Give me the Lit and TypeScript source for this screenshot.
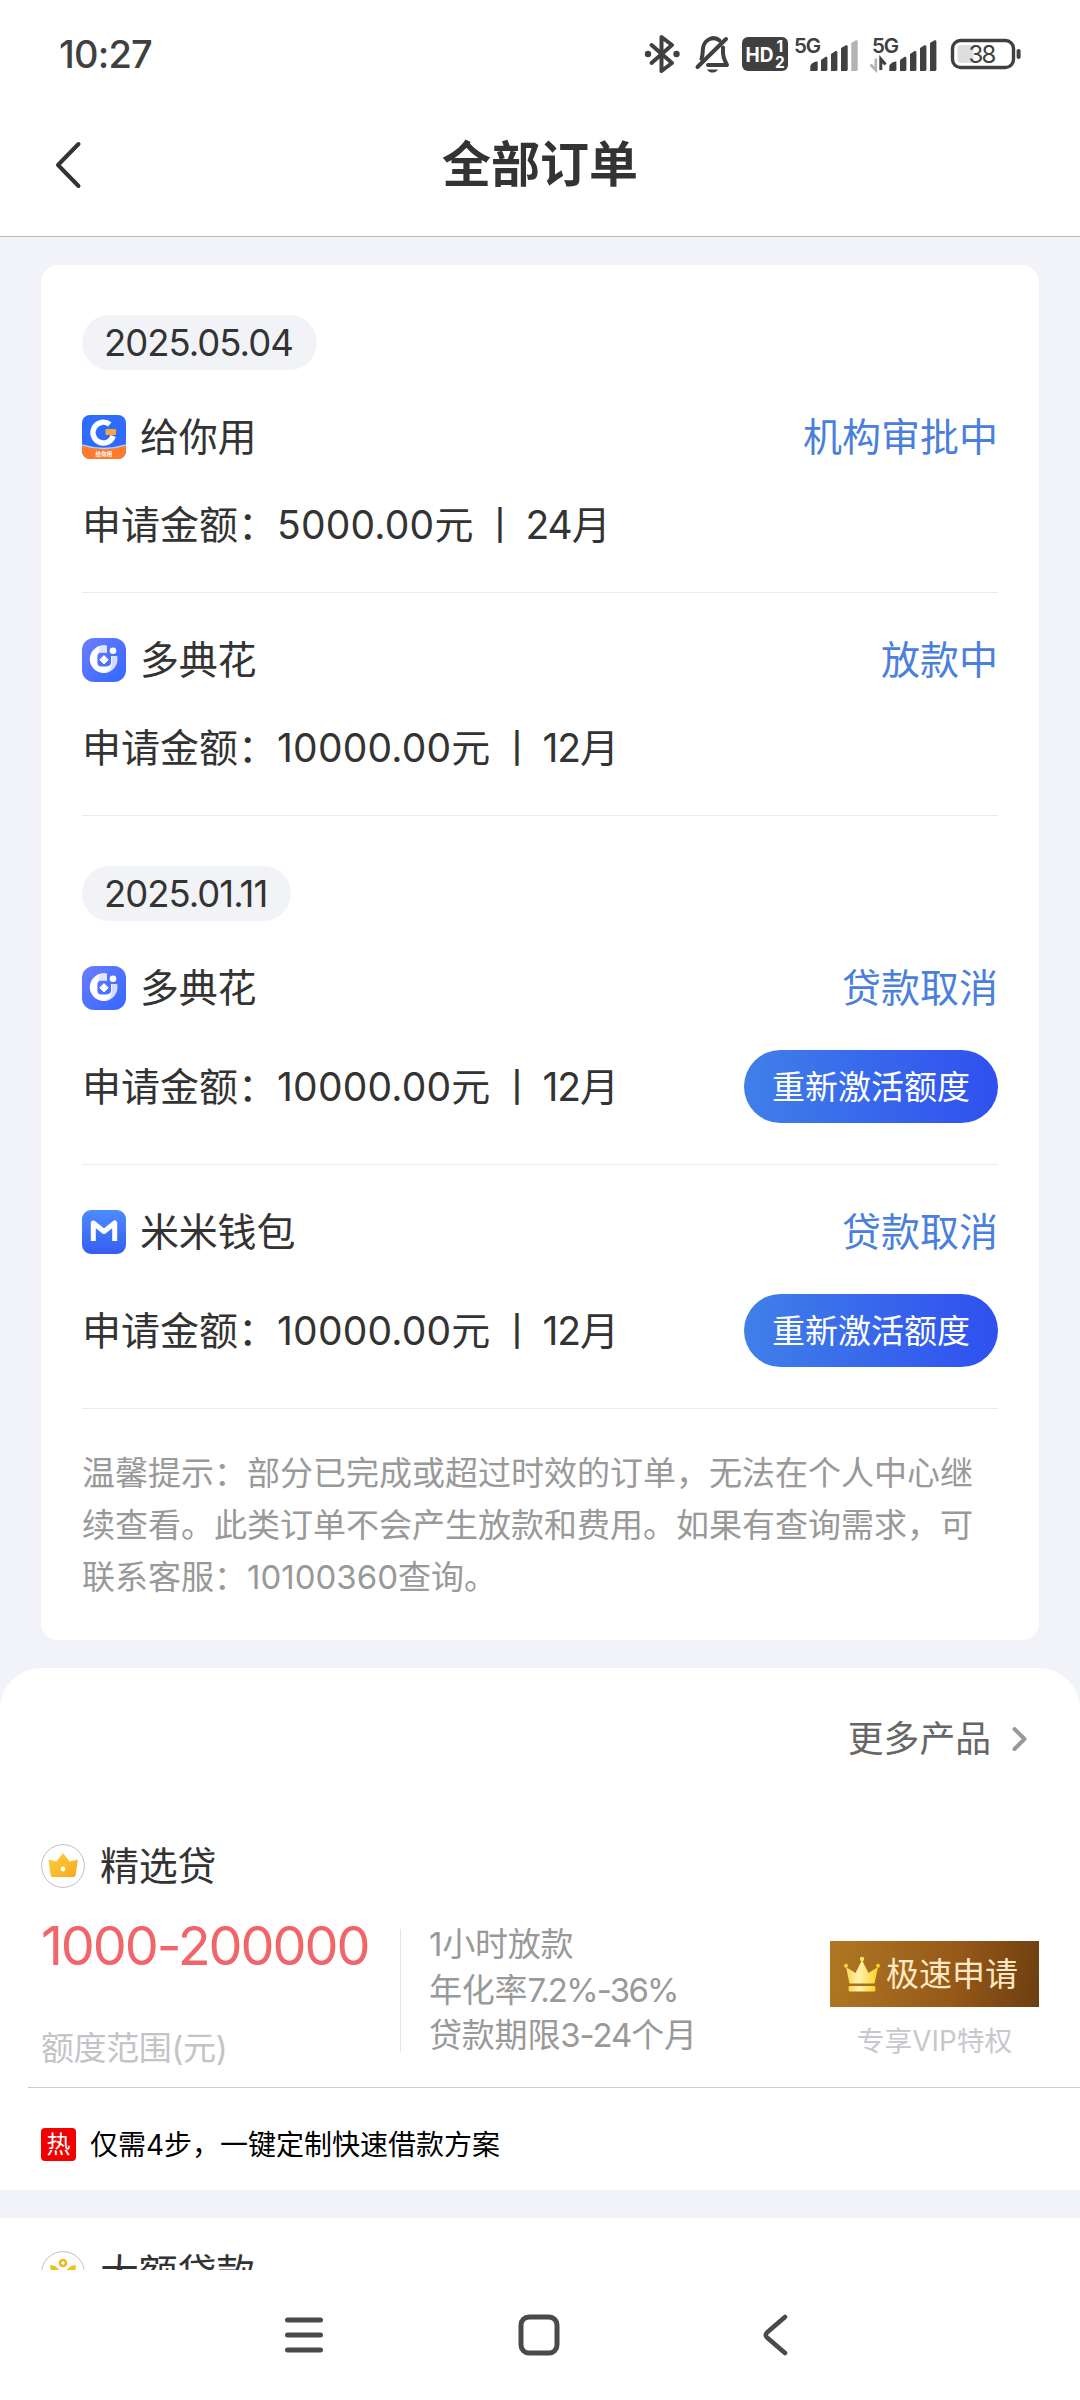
import { LitElement, html, css, svg, nothing, TemplateResult } from "lit";
import { customElement, property } from "lit/decorators.js";

type Brand = "geini" | "duodian" | "mimi";

interface Order {
  brand: Brand;
  name: string;
  status: string;
  amount: string;
  term: string;
  retry?: boolean;
}

interface OrderGroup {
  date: string;
  orders: Order[];
}

const groups: OrderGroup[] = [
  {
    date: "2025.05.04",
    orders: [
      { brand: "geini", name: "给你用", status: "机构审批中", amount: "5000.00", term: "24" },
      { brand: "duodian", name: "多典花", status: "放款中", amount: "10000.00", term: "12" },
    ],
  },
  {
    date: "2025.01.11",
    orders: [
      { brand: "duodian", name: "多典花", status: "贷款取消", amount: "10000.00", term: "12", retry: true },
      { brand: "mimi", name: "米米钱包", status: "贷款取消", amount: "10000.00", term: "12", retry: true },
    ],
  },
];

const notice = [
  "温馨提示：部分已完成或超过时效的订单，无法在个人中心继",
  "续查看。此类订单不会产生放款和费用。如果有查询需求，可",
  "联系客服：10100360查询。",
];

const FONT = css`Inter, "Noto Sans CJK SC", sans-serif`;

@customElement("status-bar")
export class StatusBar extends LitElement {
  static styles = css`
    :host {
      display: flex;
      align-items: center;
      height: 108px;
      padding: 0 59px 0 59px;
      box-sizing: border-box;
      color: #404040;
      font-family: ${FONT};
    }
    .time {
      font-size: 38px;
      font-weight: 500;
      letter-spacing: -0.8px;
      line-height: 44px;
      flex: 1;
    }
    svg {
      display: block;
      flex: none;
      overflow: visible;
    }
    .bt { margin-right: 14px; }
    .bell { margin-right: 12px; }
    .hd { margin-right: 6px; }
    .sim1 { margin-right: 10px; }
    .sim2 { margin-right: 14px; }
    text { font-family: ${FONT}; }
  `;

  render() {
    return html`
      <span class="time">10:27</span>
      <svg class="bt" width="37" height="40" viewBox="0 0 37 40" fill="none" stroke="#404040" stroke-width="4" stroke-linejoin="round" stroke-linecap="round">
        <path d="M7.5 11 L28 29 L17.5 37 V3 L28 11 L7.5 29" />
        <circle cx="4" cy="20" r="3.2" fill="#404040" stroke="none" />
        <circle cx="32.5" cy="20" r="3.2" fill="#404040" stroke="none" />
      </svg>
      <svg class="bell" width="35" height="40" viewBox="0 0 35 40" fill="none" stroke="#404040" stroke-width="4" stroke-linejoin="round" stroke-linecap="round">
        <path d="M2.5 33 L31 5" />
        <path d="M6.5 25 C8 21 7.5 18 8 14 C9.5 5 19 1.5 24.5 6.5" />
        <path d="M28 13.5 C27.5 22 29 25 32 31 H13" />
        <path d="M12 35.5 H23 C21 39.6 14 39.6 12 35.5 Z" fill="#404040" stroke="none" />
      </svg>
      <svg class="hd" width="46" height="36" viewBox="0 0 46 36">
        <rect x="0" y="1" width="46" height="34" rx="6" fill="#404040" />
        <text x="3.4" y="25.6" font-size="20.5" font-weight="700" fill="#fff" textLength="28" lengthAdjust="spacingAndGlyphs">HD</text>
        <text x="34.5" y="16.4" font-size="15.5" font-weight="700" fill="#fff">1</text>
        <text x="33" y="32" font-size="15.5" font-weight="700" fill="#fff">2</text>
      </svg>
      <svg class="sim1" width="65" height="36" viewBox="0 0 65 36" fill="#404040">
        <text x="0" y="17" font-size="20.5" font-weight="600" textLength="27">5G</text>
        <path d="M16.3 35 V30 Q18 26 22.5 25.5 H23.7 V34 L22.7 35 Z" />
        <path d="M27 35 V24 L32 20.5 L33.4 21.5 V34 L32.4 35 Z" />
        <path d="M37 35 V18 L42 14.7 L43.4 15.7 V34 L42.4 35 Z" />
        <path d="M47 35 V12 L52.4 9 L53.7 10 V34 L52.7 35 Z" />
        <path fill="#b3b3b3" d="M57.3 35 V7 L62.4 4 L63.7 5 V34 L62.7 35 Z" />
      </svg>
      <svg class="sim2" width="68" height="36" viewBox="0 0 68 36" fill="#404040">
        <text x="3" y="17" font-size="20.5" font-weight="600" textLength="27">5G</text>
        <path d="M6.8 22.5 V34 L1.5 28.5" fill="none" stroke="#b3b3b3" stroke-width="2.6" />
        <path d="M11.8 34 V23 L16.5 28.5" fill="none" stroke="#404040" stroke-width="3" />
        <path d="M20.3 35 V30 Q22 26 26.5 25.5 H27.4 V34 L26.4 35 Z" />
        <path d="M31 35 V24 L36 20.5 L37.4 21.5 V34 L36.4 35 Z" />
        <path d="M41 35 V18 L46 14.7 L47.4 15.7 V34 L46.4 35 Z" />
        <path d="M51 35 V12 L56 9 L57.4 10 V34 L56.4 35 Z" />
        <path d="M61 35 V7 L66 4 L67.4 5 V34 L66.4 35 Z" />
      </svg>
      <svg width="70" height="32" viewBox="0 0 70 32">
        <rect x="1.5" y="2.5" width="61" height="27" rx="8" fill="none" stroke="#404040" stroke-width="3.4" />
        <rect x="6.5" y="7" width="16" height="18" rx="3.5" fill="#dedede" />
        <rect x="65.6" y="11" width="4" height="10" rx="2" fill="#404040" />
        <text x="17.4" y="25" font-size="24" font-weight="400" fill="#404040" textLength="28">38</text>
      </svg>
    `;
  }
}

@customElement("brand-icon")
export class BrandIcon extends LitElement {
  @property() brand: Brand = "geini";

  static styles = css`
    :host { display: block; width: 44px; height: 44px; flex: none; }
    svg { display: block; }
    text { font-family: "Noto Sans CJK SC", sans-serif; }
  `;

  private art() {
    switch (this.brand) {
      case "geini":
        return svg`
          <clipPath id="r"><rect width="44" height="44" rx="8" /></clipPath>
          <g clip-path="url(#r)">
            <rect width="44" height="44" fill="#2f6bff" />
            <path d="M0 30 Q22 37 44 30 V44 H0 Z" fill="#ff7a2b" />
            <path d="M0 30 Q22 37 44 30" fill="none" stroke="#b9d0ea" stroke-width="1.4" />
            <path d="M27.8 9.4 A10.4 10.4 0 1 0 31.2 21" fill="none" stroke="#fff" stroke-width="5.4" />
            <rect x="23.5" y="14" width="10.5" height="6" rx="1.2" fill="#f5a83c" />
            <text x="22" y="41" font-size="5.6" font-weight="700" fill="#fff" text-anchor="middle">给你用</text>
          </g>`;
      case "duodian":
        return svg`
          <defs><linearGradient id="g" x1="0" y1="0" x2="1" y2="1">
            <stop offset="0" stop-color="#6b7dff" /><stop offset="1" stop-color="#3267ff" />
          </linearGradient></defs>
          <rect width="44" height="44" rx="12" fill="url(#g)" />
          <path d="M25 7.8 A13.8 13.8 0 1 0 35 18 H29 V24 Q29 28.4 24.6 28.4 H19.4 Q15.4 28.4 15.4 24.4 V18.4 Q15.4 14.6 19.4 14.6 H25 Z" fill="#fff" />
          <path d="M35.2 18 H29.6 V26 Q29 32 24 35 Q36.4 31 35.2 18 Z" fill="#d5dcff" />
          <path d="M17.5 9 Q20 7.4 25 7.8 V14.6 H19.4 Q17.4 14.6 16.4 16 Z" fill="#dfe3ff" />
          <circle cx="31" cy="12.8" r="3.3" fill="#fff" />
          <path d="M22 17.6 L26.2 21.8 L22 26 L17.8 21.8 Z" fill="#fff" stroke="#fff" stroke-width="1" stroke-linejoin="round" />`;
      default:
        return svg`
          <defs><linearGradient id="g" x1="0" y1="0" x2="0" y2="1">
            <stop offset="0" stop-color="#4d8cff" /><stop offset="1" stop-color="#345ef0" />
          </linearGradient></defs>
          <rect width="44" height="44" rx="9" fill="url(#g)" />
          <path d="M11.3 31 V13 L22 21.5 L32.7 13 V31" fill="none" stroke="#fff" stroke-width="5" stroke-linejoin="round" />`;
    }
  }

  render() {
    return html`<svg width="44" height="44" viewBox="0 0 44 44">${this.art()}</svg>`;
  }
}

@customElement("order-item")
export class OrderItem extends LitElement {
  @property({ attribute: false }) order!: Order;

  static styles = css`
    :host {
      display: flex;
      flex-direction: column;
      gap: 40px;
      padding: 45px 0 41px;
      border-bottom: 1px solid #ececee;
      font-size: 39px;
      line-height: 44px;
      color: #333;
    }
    .head, .body {
      display: flex;
      align-items: center;
    }
    .head { height: 44px; }
    .name {
      flex: 1;
      margin-left: 14px;
      letter-spacing: -0.2px;
    }
    .status { color: #4a80dc; }
    .body { height: 52px; justify-content: space-between; }
    .body.tall { height: 73px; }
    .amount { display: flex; }
    .digits { letter-spacing: 0.2px; }
    .term { letter-spacing: -1px; }
    .bar { margin: 0 6px 0 7px; }
    .retry {
      width: 254px;
      height: 73px;
      border: 0;
      padding: 0;
      border-radius: 37px;
      background: linear-gradient(90deg, #4080e8, #2f50f0);
      color: #fff;
      font: inherit;
      font-size: 33px;
      line-height: 74px;
    }
  `;

  render() {
    const o = this.order;
    return html`
      <div class="head">
        <brand-icon .brand=${o.brand}></brand-icon>
        <span class="name">${o.name}</span>
        <span class="status">${o.status}</span>
      </div>
      <div class="body ${o.retry ? "tall" : ""}">
        <div class="amount">
          <span>申请金额：</span><span class="digits">${o.amount}</span><span>元</span>
          <span class="bar">丨</span>
          <span class="term">${o.term}</span><span>月</span>
        </div>
        ${o.retry ? html`<button class="retry">重新激活额度</button>` : nothing}
      </div>
    `;
  }
}

const crownBadge: TemplateResult = html`
  <svg width="44" height="44" viewBox="0 0 44 44">
    <defs><linearGradient id="c" x1="0" y1="0" x2="1" y2="1">
      <stop offset="0" stop-color="#ffd23c" /><stop offset="1" stop-color="#f8a620" />
    </linearGradient></defs>
    <circle cx="22" cy="22" r="21.4" fill="#fff" stroke="#bfc0c8" stroke-width="1" />
    <path d="M7.5 15.5 L15.5 17.5 L22 9 L28.5 17.5 L36.8 15.5 L34.6 31.5 Q34.4 33 32.8 33 H11.4 Q9.8 33 9.6 31.5 Z" fill="url(#c)" />
    <circle cx="22" cy="25" r="2.4" fill="#fff" />
  </svg>`;

const flowerBadge: TemplateResult = html`
  <svg width="44" height="44" viewBox="0 0 44 44">
    <circle cx="22" cy="22" r="21.4" fill="#fff" stroke="#bfc0c8" stroke-width="1" />
    <ellipse cx="22" cy="12" rx="3" ry="3" fill="none" stroke="#ecb91c" stroke-width="2.6" />
    <path d="M9 14 L14 15 L19 19.5 H25 L30 15 L35 14 L33 30 H11 Z" fill="#ecc21c" />
  </svg>`;

@customElement("app-root")
export class AppRoot extends LitElement {
  static styles = css`
    :host {
      display: flex;
      flex-direction: column;
      width: 1080px;
      height: 2400px;
      overflow: hidden;
      background: #fff;
      color: #333;
      font-family: ${FONT};
    }
    svg { display: block; flex: none; }
    .header {
      display: grid;
      grid-template-columns: 200px 1fr 200px;
      align-items: center;
      height: 129px;
      padding-bottom: 15px;
      box-sizing: border-box;
      border-bottom: 1px solid #bcbcc0;
    }
    .back { margin-left: 52px; }
    .title {
      margin: 0;
      text-align: center;
      font-size: 49px;
      font-weight: 700;
      line-height: 60px;
    }
    .content {
      display: flex;
      flex-direction: column;
      height: 2033px;
      overflow: hidden;
      background: #f2f3f8;
    }
    .content > * { flex: none; }
    .card {
      margin: 28px 41px;
      height: 1375px;
      box-sizing: border-box;
      padding: 0 41px;
      border-radius: 17px;
      background: #fff;
    }
    .group { padding-top: 50px; }
    .date {
      display: inline-block;
      height: 55px;
      padding: 0 24px 0 22px;
      border-radius: 28px;
      background: #f2f3f7;
      font-size: 36.5px;
      letter-spacing: -1px;
      line-height: 57px;
      vertical-align: top;
    }
    .notice {
      margin: 0;
      padding-top: 38px;
      color: #999;
      font-size: 33px;
      line-height: 52px;
      white-space: nowrap;
    }
    .notice span { display: block; }
    .products {
      height: 522px;
      box-sizing: border-box;
      border-radius: 41px 41px 0 0;
      background: #fff;
    }
    .more {
      display: flex;
      justify-content: flex-end;
      align-items: center;
      height: 142px;
      padding-right: 52px;
      gap: 20px;
      color: #666;
      font-size: 35.8px;
      line-height: 44px;
    }
    .product-title {
      display: flex;
      align-items: center;
      gap: 15px;
      height: 44px;
      padding-left: 41px;
      font-size: 39px;
      line-height: 44px;
      letter-spacing: -0.3px;
    }
    .products .product-title { margin-top: 34px; }
    .offer {
      display: grid;
      grid-template-columns: 360px 1fr 209px;
      height: 199px;
      margin-left: 28px;
      padding: 0 41px 0 13px;
      border-bottom: 1px solid #ccc;
    }
    .range {
      display: flex;
      flex-direction: column;
      justify-content: space-between;
      height: 123px;
      margin-top: 41px;
      border-right: 1px solid #e4e4e8;
    }
    .range strong {
      font-size: 54px;
      font-weight: 400;
      line-height: 34px;
      letter-spacing: -2.1px;
      color: #f0646a;
      white-space: nowrap;
    }
    .range span {
      font-size: 33px;
      letter-spacing: -0.4px;
      line-height: 8px;
      color: #c4c4c8;
    }
    .terms {
      margin: 34px 0 0 28px;
      font-size: 33px;
      line-height: 45.5px;
      letter-spacing: -0.2px;
      color: #999;
      white-space: nowrap;
    }
    .terms div { height: 45.5px; }
    .rate { letter-spacing: -1.8px; }
    .months { letter-spacing: -1.1px; }
    .apply {
      display: flex;
      flex-direction: column;
      align-items: center;
      padding-top: 53px;
    }
    .vip {
      display: flex;
      align-items: center;
      width: 209px;
      height: 66px;
      padding: 0 0 0 13px;
      box-sizing: border-box;
      border: 0;
      gap: 5px;
      background: linear-gradient(100deg, #b07824, #955818 60%, #6c3e10);
      color: #ffe8c4;
      font: inherit;
      font-size: 33px;
      line-height: 66px;
      white-space: nowrap;
    }
    .perk {
      margin-top: 14px;
      font-size: 27.8px;
      line-height: 40px;
      color: #c8c8cc;
    }
    .hot-row {
      display: flex;
      align-items: center;
      height: 101px;
      padding: 12px 0 0 41px;
      box-sizing: border-box;
      gap: 14px;
      color: #000;
      font-size: 28px;
      line-height: 34px;
    }
    .hot {
      width: 35px;
      height: 33px;
      border-radius: 4px;
      background: #f40000;
      color: #fff;
      font-size: 24px;
      line-height: 33px;
      text-align: center;
    }
    .next {
      margin-top: 28px;
      height: 140px;
      padding-top: 33px;
      background: #fff;
    }
    .nav {
      display: flex;
      flex: none;
      align-items: center;
      height: 130px;
      box-sizing: border-box;
      padding-left: 284px;
    }
    .home { margin: 0 201px 0 194px; }
  `;

  render() {
    return html`
      <status-bar></status-bar>
      <header class="header">
        <svg class="back" width="32" height="50" viewBox="0 0 32 50" fill="none" stroke="#333" stroke-width="4" stroke-linecap="round" stroke-linejoin="round">
          <path d="M26.5 4 L6 25 L26.5 46" />
        </svg>
        <h1 class="title">全部订单</h1>
      </header>
      <main class="content">
        <section class="card">
          ${groups.map(
            (g) => html`
              <div class="group"><span class="date">${g.date}</span></div>
              ${g.orders.map((o) => html`<order-item .order=${o}></order-item>`)}
            `
          )}
          <p class="notice">${notice.map((line) => html`<span>${line}</span>`)}</p>
        </section>
        <section class="products">
          <div class="more">
            <span>更多产品</span>
            <svg width="17" height="28" viewBox="0 0 17 28" fill="none" stroke="#999" stroke-width="4" stroke-linecap="round" stroke-linejoin="round">
              <path d="M3.5 4 L13.5 14 L3.5 24" />
            </svg>
          </div>
          <div class="product-title">${crownBadge}<span>精选贷</span></div>
          <div class="offer">
            <div class="range"><strong>1000-200000</strong><span>额度范围(元)</span></div>
            <div class="terms">
              <div>1小时放款</div>
              <div>年化率<span class="rate">7.2%-36%</span></div>
              <div>贷款期限<span class="months">3-24</span>个月</div>
            </div>
            <div class="apply">
              <button class="vip">
                <svg width="38" height="36" viewBox="0 0 38 36">
                  <defs><linearGradient id="k" x1="0" y1="0" x2="1" y2="0">
                    <stop offset="0" stop-color="#fbd548" /><stop offset="0.4" stop-color="#fff3b0" /><stop offset="1" stop-color="#ffd21e" />
                  </linearGradient></defs>
                  <path d="M6.5 27.5 L3 11 L12.5 17 L19 4 L25.5 17 L35 11 L31.5 27.5 Z" fill="url(#k)" />
                  <circle cx="3" cy="9.8" r="2" fill="#fbd548" />
                  <circle cx="19" cy="3" r="2.2" fill="#ffe26a" />
                  <circle cx="35" cy="9.8" r="2" fill="#ffd21e" />
                  <rect x="5.6" y="30" width="26.8" height="5.6" rx="1.4" fill="url(#k)" />
                </svg>
                <span>极速申请</span>
              </button>
              <span class="perk">专享VIP特权</span>
            </div>
          </div>
          <div class="hot-row"><span class="hot">热</span><span>仅需4步，一键定制快速借款方案</span></div>
        </section>
        <section class="next">
          <div class="product-title">${flowerBadge}<span>大额贷款</span></div>
        </section>
      </main>
      <nav class="nav">
        <svg width="40" height="40" viewBox="0 0 40 40" stroke="#4a4a4a" stroke-width="5" stroke-linecap="round">
          <path d="M3.5 5 H36.5 M3.5 20 H36.5 M3.5 35 H36.5" />
        </svg>
        <svg class="home" width="42" height="42" viewBox="0 0 42 42" fill="none" stroke="#4a4a4a" stroke-width="5">
          <rect x="3" y="3" width="36" height="36" rx="8" />
        </svg>
        <svg width="28" height="42" viewBox="0 0 28 42" fill="none" stroke="#4a4a4a" stroke-width="4.6" stroke-linecap="round" stroke-linejoin="round">
          <path d="M24 3 L6 18.6 Q3.4 21 6 23.4 L24 39" />
        </svg>
      </nav>
    `;
  }
}
